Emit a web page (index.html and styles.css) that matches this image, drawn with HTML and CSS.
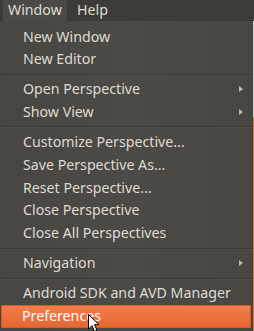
FILE: index.html
```html
<!DOCTYPE html>
<html lang="en">
<head>
    <meta charset="UTF-8">
    <title>Window menu</title>
    <link rel="stylesheet" href="styles.css">
</head>
<body>
    <!-- Menu bar -->
    <div class="menubar">
        <span class="bar-item open">Window</span>
        <span class="bar-item">Help</span>
    </div>

    <div class="stage">
        <!-- Window dropdown -->
        <ul class="menu">
            <li class="item">New Window</li>
            <li class="item">New Editor</li>
            <li class="sep"></li>
            <li class="item sub">Open Perspective</li>
            <li class="item sub">Show View</li>
            <li class="sep"></li>
            <li class="item">Customize Perspective...</li>
            <li class="item">Save Perspective As...</li>
            <li class="item">Reset Perspective...</li>
            <li class="item">Close Perspective</li>
            <li class="item">Close All Perspectives</li>
            <li class="sep"></li>
            <li class="item sub">Navigation</li>
            <li class="sep"></li>
            <li class="item">Android SDK and AVD Manager</li>
            <li class="item active">Preferences</li>
        </ul>
        <div class="desktop-edge"></div>

        <!-- Mouse pointer -->
        <svg class="pointer" width="14" height="20" viewBox="0 0 14 20">
            <path d="M1.5 1.5 L1.5 16 L5 12.6 L7.6 18.4 L10 17.3 L7.5 11.6 L12 11.6 Z" fill="#fff" stroke="#000" stroke-width="1" stroke-linejoin="round"/>
        </svg>
    </div>
</body>
</html>
```
FILE: styles.css
```css
body {
    margin: 0;
    padding: 0;
    width: 254px;
    height: 331px;
    overflow: hidden;
    background: #3c3b37;
    font-family: "Noto Sans", sans-serif;
    font-size: 14.2px;
    color: #dfdbd2;
}

/* Menu bar */
.menubar {
    height: 21px;
    display: flex;
    align-items: center;
    padding-left: 3px;
    background: #3c3b37;
}

.bar-item {
    height: 21px;
    line-height: 20px;
    padding: 0 5px 0 10px;
}

.bar-item.open {
    box-sizing: border-box;
    width: 64px;
    padding-left: 5px;
    background: #4a4945;
    border-radius: 2px 2px 0 0;
}

/* Dropdown */
.stage {
    position: relative;
    display: flex;
    height: 310px;
}

.menu {
    list-style: none;
    margin: 0;
    padding: 4.6px 0 0;
    width: 253px;
    background: linear-gradient(to right, #474641, #4b4a45 50%, #474641);
}

.item {
    position: relative;
    height: 22.75px;
    line-height: 22.75px;
    padding-left: 23px;
    white-space: nowrap;
}

.item.sub::after {
    content: "";
    position: absolute;
    left: 239px;
    top: 8px;
    border-left: 4px solid #bdbab3;
    border-top: 3.5px solid transparent;
    border-bottom: 3.5px solid transparent;
}

.item.active {
    margin: 0 2px 0 1px;
    padding-left: 21px;
    color: #fff;
    background: linear-gradient(#f2804c, #e5652f);
    box-shadow: inset 0 0 0 1px #d95c27;
    border-radius: 2px;
}

.sep {
    margin: 2.6px 0 2.7px;
    height: 0;
    border-top: 1px solid #3a3935;
    border-bottom: 1px solid #514f4a;
}

/* Strip of the desktop behind the menu */
.desktop-edge {
    width: 1px;
    background: linear-gradient(#d9d5cf 0, #d9d5cf 96px, #e2733f 97px, #e2733f 100%);
}

.pointer {
    position: absolute;
    left: 87px;
    top: 292px;
}
```
